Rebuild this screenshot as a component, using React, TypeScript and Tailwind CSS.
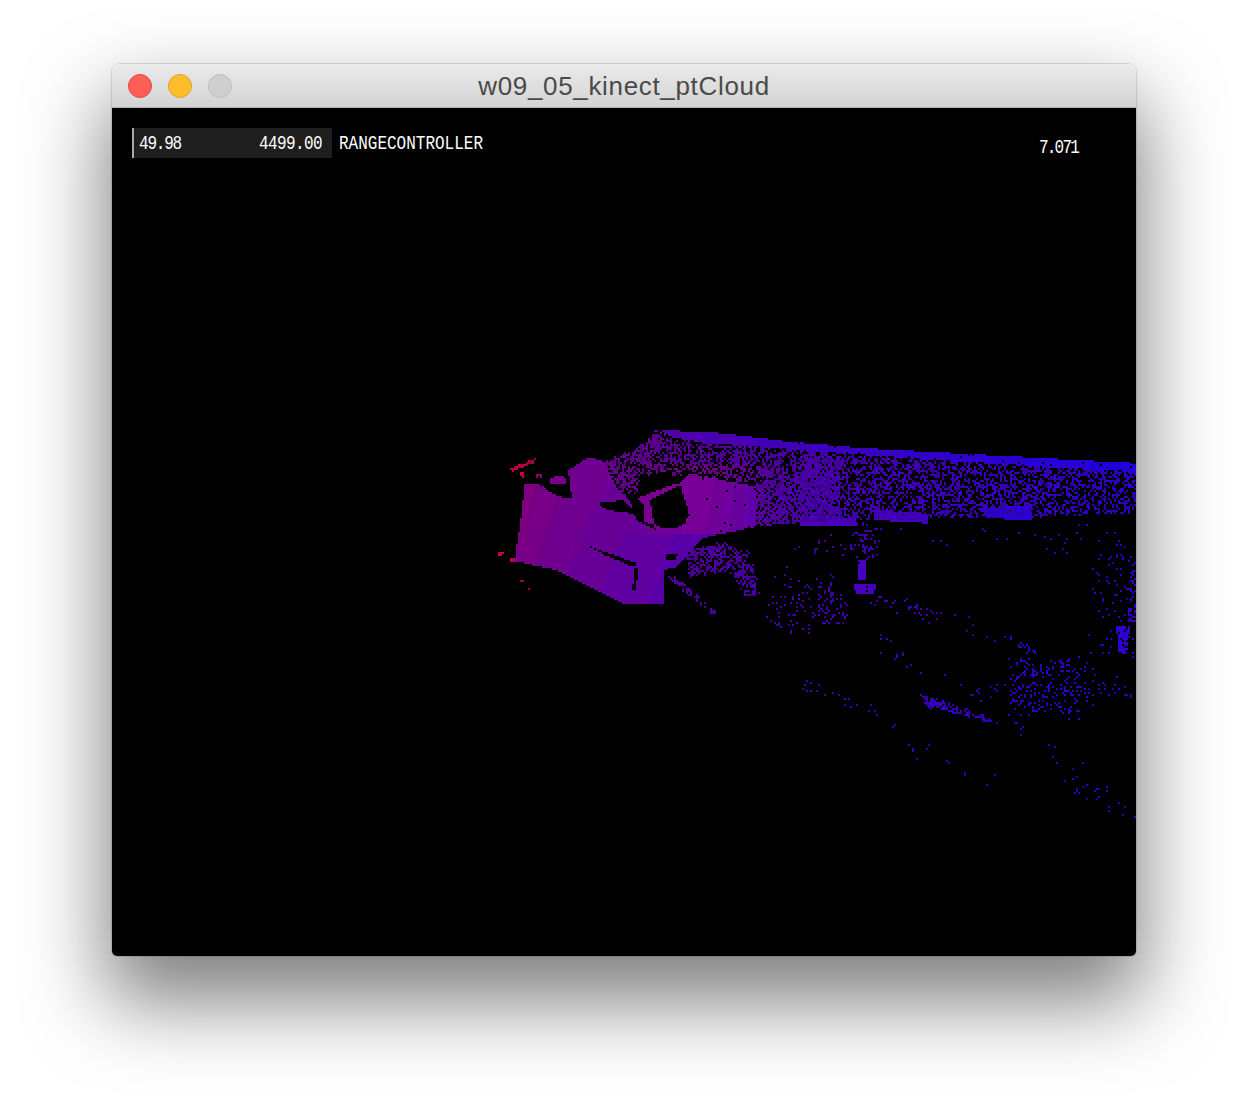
import { useMemo } from "react";

type Pt = [number, number];
type Region = { pts: Pt[]; density: number; hot?: number };

// canvas starts at (112,108) in the screenshot; zoomed crops were taken at 3x
const fromA = (pts: Pt[]): Pt[] => pts.map(([x, y]) => [490 + x / 3 - 112, 420 + y / 3 - 108]);
const fromB = (pts: Pt[]): Pt[] => pts.map(([x, y]) => [800 + x / 3 - 112, 420 + y / 3 - 108]);

const thin = (x1: number, y1: number, x2: number, y2: number, w = 5): Pt[] => [
  [x1, y1 - w],
  [x2, y2 - w],
  [x2, y2 + w],
  [x1, y1 + w],
];

const a = (density: number, pts: Pt[], hot = 0): Region => ({ pts: fromA(pts), density, hot });
const b = (density: number, pts: Pt[], hot = 0): Region => ({ pts: fromB(pts), density, hot });

const holes: Pt[][] = [
  [[295, 378], [440, 430], [432, 442], [345, 405]],
  [[320, 250], [400, 240], [450, 290], [420, 280], [350, 270]],
  [[160, 195], [230, 225], [225, 235], [175, 215]],
  [[492, 235], [570, 205], [590, 310], [555, 325], [500, 320]],
  [[432, 445], [445, 445], [438, 510], [428, 510]],
  [[445, 215], [460, 170], [540, 150], [555, 180]],
  [[530, 400], [565, 400], [555, 420], [530, 418]],
];

const regions: Region[] = [
  // left wall and front face
  a(1, [[105, 190], [150, 195], [230, 235], [245, 235], [235, 150], [300, 110], [340, 125], [380, 200], [420, 240], [440, 300], [500, 330], [640, 350], [560, 440], [525, 450], [525, 550], [400, 550], [200, 450], [80, 425], [75, 410], [90, 320]]),
  a(0.65, [[340, 130], [430, 90], [500, 30], [540, 40], [500, 90], [450, 140], [440, 220], [400, 230]]),
  a(0.55, [[500, 40], [545, 60], [575, 165], [450, 165]]),
  // right slab
  a(0.98, [[570, 190], [600, 160], [720, 185], [800, 200], [800, 320], [700, 340], [600, 290]]),
  a(1, [[490, 315], [600, 290], [700, 340], [640, 355], [500, 335]]),
  a(0.82, [[800, 190], [1050, 130], [1050, 300], [900, 310], [800, 320]]),
  a(0.55, [[540, 60], [1050, 100], [1050, 140], [800, 190], [600, 160], [570, 150]]),
  // struts
  a(1, [[440, 235], [560, 190], [570, 195], [460, 250]], 0.15),
  a(1, [[460, 240], [480, 240], [492, 315], [460, 305]], 0.15),
  a(1, [[430, 390], [540, 375], [560, 410], [470, 425]], 0.3),
  // top rail
  a(1, [[510, 30], [700, 40], [1050, 85], [1050, 100], [800, 80], [650, 70], [540, 50]], -0.25),
  // clutter under the slab
  a(0.55, [[580, 390], [700, 370], [780, 400], [810, 530], [770, 540], [720, 450], [600, 470]]),
  a(0.65, [[530, 470], [560, 470], [680, 580], [660, 580]]),
  a(0.08, [[880, 440], [1050, 480], [1050, 630], [800, 630]]),
  // far right
  b(0.97, [[0, 68], [200, 85], [1008, 130], [1008, 155], [900, 150], [400, 120], [0, 90]], -0.25),
  b(0.5, [[0, 100], [500, 125], [1008, 150], [1008, 190], [600, 200], [0, 210]]),
  b(0.48, [[0, 205], [600, 195], [1008, 185], [1008, 280], [700, 290], [0, 300]]),
  b(1, [[0, 285], [170, 295], [170, 320], [0, 315]]),
  b(1, [[220, 270], [385, 280], [385, 310], [220, 300]]),
  b(1, [[540, 265], [690, 255], [695, 300], [560, 295]], -0.25),
  b(0.35, [[170, 315], [235, 315], [220, 410], [180, 410]]),
  b(0.95, [[175, 420], [200, 420], [195, 480], [175, 480]]),
  b(0.95, [[160, 495], [230, 490], [220, 525], [170, 525]]),
  b(0.12, [[0, 340], [170, 370], [170, 410], [0, 380]]),
  b(0.22, [[60, 530], [140, 530], [120, 610], [50, 590]]),
  b(0.2, [[630, 720], [850, 720], [850, 890], [620, 870]]),
  b(0.07, [[850, 760], [1000, 790], [1000, 860], [850, 840]]),
  b(0.75, [[360, 825], [420, 840], [610, 910], [540, 900], [380, 860]]),
  b(0.85, [[950, 620], [990, 620], [980, 700], [955, 700]]),
  b(0.4, [[985, 450], [1008, 450], [1008, 620], [985, 620]]),
  b(0.06, [[880, 390], [1008, 380], [1008, 720], [880, 720]]),
  b(0.03, [[240, 340], [700, 330], [1000, 310], [1000, 400], [500, 390]]),
  b(0.3, thin(230, 650, 330, 740, 8)),
  b(0.16, thin(0, 780, 290, 910, 8)),
  b(0.18, thin(190, 530, 420, 590, 14)),
  b(0.1, thin(420, 590, 720, 690, 8)),
  b(0.5, thin(650, 678, 715, 695, 6)),
  b(0.08, thin(380, 765, 600, 830, 14)),
  b(0.08, thin(640, 900, 1000, 1170, 14)),
  b(0.12, thin(810, 1090, 970, 1170, 12)),
  b(0.05, thin(300, 950, 590, 1095, 14)),
  b(1, [[1000, 1188], [1008, 1188], [1008, 1194], [1000, 1194]]),
  // red specks at the far left edge
  a(0.8, thin(62, 150, 140, 120, 6), 1),
  a(0.9, [[90, 155], [102, 155], [102, 172], [90, 172]], 1),
  a(0.9, [[25, 397], [45, 397], [45, 406], [25, 406]], 1),
  a(0.9, [[60, 415], [78, 415], [78, 425], [60, 425]], 0.7),
  a(0.25, [[95, 485], [135, 485], [135, 500], [95, 500]], 0.8),
  a(0.9, [[140, 162], [155, 162], [155, 175], [140, 175]], 0.3),
  a(0.9, [[182, 172], [230, 168], [225, 190], [180, 190]]),
];

const inside = (x: number, y: number, pts: Pt[]) => {
  let hit = false;
  for (let i = 0, j = pts.length - 1; i < pts.length; j = i++) {
    const [xi, yi] = pts[i];
    const [xj, yj] = pts[j];
    if (yi > y !== yj > y && x < ((xj - xi) * (y - yi)) / (yj - yi) + xi) hit = !hit;
  }
  return hit;
};

// colour follows depth: magenta close to the camera, blue far away
const colorAt = (x: number, y: number, hot: number, dim: number) => {
  const depth = Math.min(1, Math.max(0, (x - 400 + (y - 350) * 0.35) / 620));
  const t = Math.pow(depth, 0.45);
  // the slab behind the struts sits nearer to the camera than its neighbours
  const slab = y > 355 && y < 425 ? 0.4 * Math.exp(-(((x - 590) / 60) ** 2)) : 0;
  const heat = hot + slab;
  const r = Math.round((150 - 100 * t + heat * 70) * dim);
  const bl = Math.round((100 + 110 * t - heat * 40) * dim);
  const q = (n: number) => Math.round(n / 8) * 8;
  return `rgb(${q(r)},0,${q(bl)})`;
};

function PointCloud() {
  const paths = useMemo(() => {
    let seed = 90510;
    const rand = () => {
      seed = (seed + 0x6d2b79f5) | 0;
      let t = Math.imul(seed ^ (seed >>> 15), 1 | seed);
      t = (t + Math.imul(t ^ (t >>> 7), 61 | t)) ^ t;
      return ((t ^ (t >>> 14)) >>> 0) / 4294967296;
    };
    const seen = new Set<string>();
    const buckets = new Map<string, string>();
    for (const region of regions) {
      const xs = region.pts.map((p) => p[0]);
      const ys = region.pts.map((p) => p[1]);
      const x0 = Math.floor(Math.min(...xs) / 2) * 2 - 8;
      const x1 = Math.max(...xs) + 8;
      const y0 = Math.floor(Math.min(...ys) / 2) * 2 - 8;
      const y1 = Math.max(...ys) + 8;
      // sparse regions get a frayed outline instead of a hard polygon edge
      const fray = region.density < 0.4 ? 14 : region.density < 0.8 ? 3 : 0;
      for (let y = y0; y <= y1; y += 2) {
        for (let x = x0; x <= x1; x += 2) {
          const key = `${x},${y}`;
          const jx = (rand() - 0.5) * fray;
          const jy = (rand() - 0.5) * fray;
          if (seen.has(key) || !inside(x + 1 + jx, y + 1 + jy, region.pts)) continue;
          if (holes.some((h) => inside(x + 1, y + 1, fromA(h)))) continue;
          if (rand() > region.density) continue;
          seen.add(key);
          const dim = region.density < 0.85 ? 0.75 + rand() * 0.25 : 1;
          const color = colorAt(x, y, region.hot ?? 0, dim);
          buckets.set(color, (buckets.get(color) ?? "") + `M${x} ${y}h2v2h-2z`);
        }
      }
    }
    return [...buckets.entries()];
  }, []);

  return (
    <svg className="absolute inset-0" width="1024" height="848" shapeRendering="crispEdges">
      {paths.map(([color, d]) => (
        <path key={color} d={d} fill={color} />
      ))}
    </svg>
  );
}

const lcd = "font-['Liberation_Mono',monospace] text-[16px] leading-[30px] text-white scale-y-[1.25]";

export default function App() {
  return (
    <div className="min-h-[1116px] bg-white pt-16 overflow-hidden">
      <div className="mx-auto flex h-[892px] w-[1024px] flex-col rounded-t-lg rounded-b-[5px] overflow-hidden shadow-[0_40px_80px_6px_rgba(0,0,0,0.5),0_0_0_1px_rgba(0,0,0,0.12)]">
        {/* Title bar */}
        <div className="relative flex h-11 shrink-0 items-center justify-center border-b border-[#b1b1b1] bg-gradient-to-b from-[#ebebeb] to-[#d3d3d3]">
          <div className="absolute left-4 flex gap-4">
            <span className="h-6 w-6 rounded-full border border-[#e5453f] bg-[#ff5f57]" />
            <span className="h-6 w-6 rounded-full border border-[#e0a028] bg-[#ffbd2e]" />
            <span className="h-6 w-6 rounded-full border border-[#bdbdbd] bg-[#cfcfcf]" />
          </div>
          <span className="mt-0.5 font-['Liberation_Sans',sans-serif] text-[26px] tracking-[0.67px] text-[#4a4a4a]">w09_05_kinect_ptCloud</span>
        </div>

        {/* Sketch canvas */}
        <div className="relative flex-1 overflow-hidden bg-black">
          <PointCloud />
          <div className="relative flex items-start pl-5 pr-[58px] pt-5">
            <div className="flex h-[30px] w-[200px] items-center justify-between border-l-2 border-[#aaaaaa] bg-[#1e1e1e] pl-[5px] pr-2.5">
              <span className={`${lcd} mt-0.5 tracking-[-1.2px]`}>49.98</span>
              <span className={`${lcd} mt-0.5 tracking-[-0.6px]`}>4499.00</span>
            </div>
            <span className={`${lcd} ml-[7px] mt-px`}>RANGECONTROLLER</span>
            <span className={`${lcd} ml-auto mt-[5px] tracking-[-1.8px]`}>7.071</span>
          </div>
        </div>
      </div>
    </div>
  );
}
